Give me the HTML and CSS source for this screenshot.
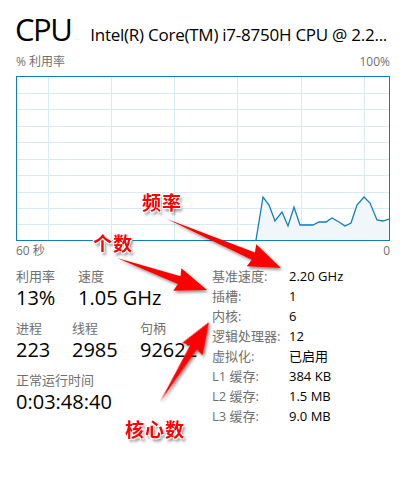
FILE: index.html
```html
<!DOCTYPE html>
<html lang="zh-CN">
<head>
<meta charset="utf-8">
<title>CPU</title>
<link rel="stylesheet" href="styles.css">
</head>
<body>
<div class="page">
  <header class="head">
    <h1 class="title">CPU</h1>
    <div class="model">Intel(R) Core(TM) i7-8750H CPU @ 2.2...</div>
  </header>
  <div class="axis top-axis"><span>% 利用率</span><span>100%</span></div>
  <div class="graph">
    <svg width="372" height="163" viewBox="0 0 372 163">
      <g class="grid">
        <line x1="31.5" y1="0" x2="31.5" y2="163"/>
        <line x1="94.5" y1="0" x2="94.5" y2="163"/>
        <line x1="157.5" y1="0" x2="157.5" y2="163"/>
        <line x1="220.5" y1="0" x2="220.5" y2="163"/>
        <line x1="284.5" y1="0" x2="284.5" y2="163"/>
        <line x1="347.5" y1="0" x2="347.5" y2="163"/>
        <line x1="0" y1="16.5" x2="372" y2="16.5"/>
        <line x1="0" y1="32.5" x2="372" y2="32.5"/>
        <line x1="0" y1="49.5" x2="372" y2="49.5"/>
        <line x1="0" y1="65.5" x2="372" y2="65.5"/>
        <line x1="0" y1="82.5" x2="372" y2="82.5"/>
        <line x1="0" y1="98.5" x2="372" y2="98.5"/>
        <line x1="0" y1="115.5" x2="372" y2="115.5"/>
        <line x1="0" y1="131.5" x2="372" y2="131.5"/>
        <line x1="0" y1="147.5" x2="372" y2="147.5"/>
      </g>
      <polygon class="area" points="239,163 246,120 252,128 258,144 265,135 271,149 277,130 283,148 296,148 302,145 309,145 315,141 322,145 328,149 334,146 340,128 347,120 353,126 360,143 366,144 372,142 372,163"/>
      <polyline class="plot" points="239,163 246,120 252,128 258,144 265,135 271,149 277,130 283,148 296,148 302,145 309,145 315,141 322,145 328,149 334,146 340,128 347,120 353,126 360,143 366,144 372,142"/>
    </svg>
  </div>
  <div class="axis bottom-axis"><span>60 秒</span><span>0</span></div>

  <section class="stats">
    <div class="live">
      <div class="row row-a">
        <div class="stat"><div class="label">利用率</div><div class="value">13%</div></div>
        <div class="stat"><div class="label">速度</div><div class="value">1.05 GHz</div></div>
      </div>
      <div class="row row-b">
        <div class="stat"><div class="label">进程</div><div class="value">223</div></div>
        <div class="stat"><div class="label">线程</div><div class="value">2985</div></div>
        <div class="stat"><div class="label">句柄</div><div class="value">92622</div></div>
      </div>
      <div class="row">
        <div class="stat"><div class="label">正常运行时间</div><div class="value">0:03:48:40</div></div>
      </div>
    </div>
    <dl class="specs">
      <dt>基准速度:</dt><dd>2.20 GHz</dd>
      <dt>插槽:</dt><dd>1</dd>
      <dt>内核:</dt><dd>6</dd>
      <dt>逻辑处理器:</dt><dd>12</dd>
      <dt>虚拟化:</dt><dd>已启用</dd>
      <dt>L1 缓存:</dt><dd>384 KB</dd>
      <dt>L2 缓存:</dt><dd>1.5 MB</dd>
      <dt>L3 缓存:</dt><dd>9.0 MB</dd>
    </dl>
  </section>

  <svg class="arrows" width="407" height="477" viewBox="0 0 407 477">
    <defs>
      <filter id="sh" x="-20%" y="-20%" width="140%" height="140%">
        <feDropShadow dx="1.5" dy="2" stdDeviation="1.5" flood-color="#000" flood-opacity="0.45"/>
      </filter>
    </defs>
    <g filter="url(#sh)" class="arrow">
      <polygon transform="translate(167 219) rotate(23.26)" points="0,0 94,-4 92,-12 124,0 92,12 94,4"/>
      <polygon transform="translate(117 258) rotate(19.57)" points="0,0 66,-4 64,-12 95.5,0 64,12 66,4"/>
      <polygon transform="translate(160 402) rotate(-58.5)" points="0,0 64,-4 62,-12 93.8,0 62,12 64,4"/>
    </g>
  </svg>
  <span class="note note-freq">频率</span>
  <span class="note note-count">个数</span>
  <span class="note note-core">核心数</span>
</div>
</body>
</html>
```
FILE: styles.css
```css
* { box-sizing: border-box; margin: 0; padding: 0; }
html, body { background: #fff; }
body {
  width: 407px;
  height: 477px;
  overflow: hidden;
  font-family: "Open Sans", "Noto Sans CJK SC", sans-serif;
  color: #000;
}
.page {
  position: relative;
  width: 407px;
  height: 477px;
  padding: 11px 17px 0 16px;
}
.head {
  display: flex;
  align-items: baseline;
  gap: 19px;
  height: 40px;
}
.title {
  font-size: 31px;
  font-weight: 400;
  line-height: 36px;
  margin-left: -1px;
  letter-spacing: -1.5px;
}
.model {
  font-size: 17px;
  line-height: 22px;
  white-space: nowrap;
  letter-spacing: -0.25px;
}
.axis {
  display: flex;
  justify-content: space-between;
  font-size: 12px;
  color: #707070;
  line-height: 16px;
}
.top-axis { margin-top: 3px; height: 22px; }
.bottom-axis { margin-top: 2px; height: 20px; }
.graph {
  width: 374px;
  height: 165px;
  border: 1px solid #117dbb;
}
.graph svg { display: block; }
.grid line { stroke: #d9eaf4; stroke-width: 1; }
.area { fill: #f1f6fa; }
.plot { fill: none; stroke: #117dbb; stroke-width: 1.3; stroke-linejoin: miter; }

.stats {
  display: flex;
  margin-top: 4px;
}
.live { width: 196px; }
.row { display: flex; }
.row-a { margin-bottom: 8px; }
.row-b { margin-bottom: 8px; }
.row-a .stat:first-child { width: 62px; }
.row-b .stat:nth-child(1) { width: 56px; }
.row-b .stat:nth-child(2) { width: 68px; }
.label {
  font-size: 13px;
  line-height: 18px;
  color: #707070;
}
.value {
  font-size: 20px;
  line-height: 26px;
  white-space: nowrap;
}
.specs {
  display: grid;
  grid-template-columns: 77px auto;
  font-size: 13px;
  line-height: 20px;
  margin-top: -1px;
}
.specs dt { color: #707070; }
.specs dd { color: #000; }

.arrows {
  position: absolute;
  left: 0;
  top: 0;
  pointer-events: none;
}
.arrow polygon { fill: #ff0000; }
.note {
  position: absolute;
  font-family: "Noto Sans CJK SC", sans-serif;
  font-weight: 700;
  font-size: 19px;
  line-height: 20px;
  color: #ff0000;
  letter-spacing: 1px;
  text-shadow:
    -1px -1px 0 #fff, 1px -1px 0 #fff, -1px 1px 0 #fff, 1px 1px 0 #fff,
    2px 3px 3px rgba(0,0,0,0.5);
}
.note-freq { left: 142px; top: 192px; }
.note-count { left: 93px; top: 233px; }
.note-core { left: 125px; top: 419px; }
```
